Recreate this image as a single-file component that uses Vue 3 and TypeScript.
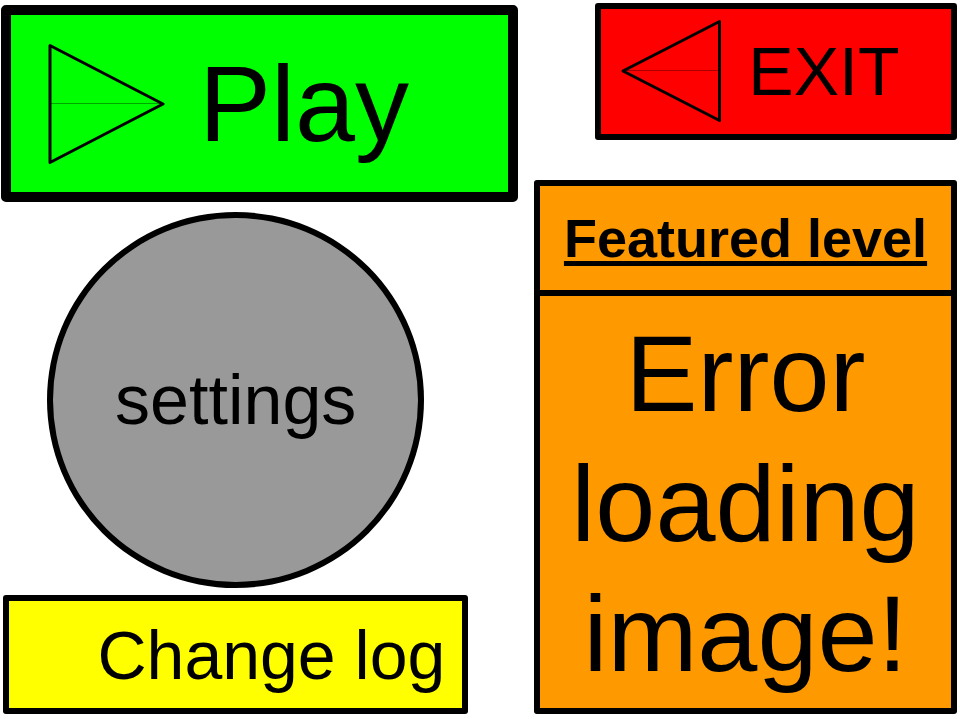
<script setup lang="ts">
interface FeaturedLevel {
  heading: string
  message: string
}

const featured: FeaturedLevel = {
  heading: 'Featured level',
  message: 'Error loading image!',
}
</script>

<template>
  <main class="menu">
    <nav class="column actions" aria-label="Main menu">
      <button type="button" class="box play">
        <svg class="play-icon" viewBox="0 0 118 122" aria-hidden="true">
          <path class="rule" d="M4 60.5H113" />
          <path class="outline" d="M3 2.5L116 61L3 119.5Z" />
        </svg>
        <span>Play</span>
      </button>
      <button type="button" class="settings">settings</button>
      <button type="button" class="box change-log">Change log</button>
    </nav>

    <div class="column side">
      <button type="button" class="box exit">
        <svg class="exit-icon" viewBox="0 0 102 104" aria-hidden="true">
          <path class="rule" d="M6 51.5H99" />
          <path class="outline" d="M99.5 2.5L3 52L99.5 101.5Z" />
        </svg>
        <span>EXIT</span>
      </button>
      <section class="box featured">
        <h2 class="featured-heading">{{ featured.heading }}</h2>
        <p class="featured-message">{{ featured.message }}</p>
      </section>
    </div>
  </main>
</template>

<style>
body {
  margin: 0;
  background: #fff;
}
</style>

<style scoped>
.menu {
  box-sizing: border-box;
  display: grid;
  grid-template-columns: 517fr 423fr;
  column-gap: 16px;
  min-height: 100vh;
  padding: 3px 3px 5px 1px;
  color: #000;
  font-family: "Liberation Sans", Arial, sans-serif;
}

.column {
  display: flex;
  flex-direction: column;
  min-width: 0;
}

.actions {
  padding-top: 2px;
}

button {
  box-sizing: border-box;
  margin: 0;
  color: inherit;
  font-family: inherit;
  cursor: pointer;
}

.box {
  border: 6px solid #000;
  border-radius: 3px;
}

.play,
.exit {
  display: flex;
  align-items: center;
}

.play {
  gap: 34px;
  padding: 28px 36px 27px;
  border-width: 10px;
  border-radius: 5px;
  background: #0f0;
  font-size: 108px;
  line-height: 122px;
}

.play-icon {
  flex: none;
  width: 118px;
  height: 122px;
}

.exit {
  align-self: flex-end;
  gap: 26px;
  width: 85.5%;
  padding: 10px 19px 11px;
  background: #f00;
  font-size: 68px;
  line-height: 104px;
}

.exit-icon {
  flex: none;
  width: 102px;
  height: 104px;
}

.outline {
  fill: none;
  stroke: #000;
  stroke-width: 3;
  stroke-linejoin: round;
}

.rule {
  fill: none;
  stroke: #000;
  stroke-width: 1;
  opacity: 0.35;
}

.settings {
  width: 73%;
  aspect-ratio: 376 / 375;
  margin: 10px 0 7px 46px;
  padding: 0;
  border: 6px solid #000;
  border-radius: 50%;
  background: #999;
  font-size: 70px;
  line-height: 80px;
}

.change-log {
  width: 90%;
  margin-left: 2px;
  padding: 14px 17px 13px;
  background: #ff0;
  font-size: 68px;
  line-height: 80px;
  text-align: right;
}

.featured {
  display: flex;
  flex: 1;
  flex-direction: column;
  margin-top: 40px;
  background: #f90;
  text-align: center;
}

.featured-heading {
  margin: 0;
  padding: 21px 0;
  border-bottom: 6px solid #000;
  font-size: 54px;
  font-weight: 700;
  line-height: 62px;
  text-decoration: underline;
  text-decoration-thickness: 5px;
  text-underline-offset: 4px;
  text-decoration-skip-ink: none;
}

.featured-message {
  margin: auto 0;
  padding-top: 3px;
  font-size: 108px;
  line-height: 130px;
}
</style>
